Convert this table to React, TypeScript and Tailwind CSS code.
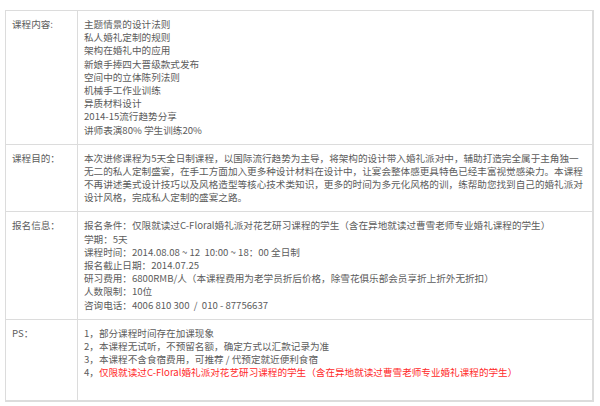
const font = { fontFamily: '"Noto Sans CJK SC", "Liberation Sans", sans-serif' };

function Row({ label, lines, last }: { label: string; lines: React.ReactNode[]; last?: boolean }) {
  return (
    <div className={`flex ${last ? "" : "border-b border-[#dcdcdc]"}`}>
      <div className="w-[72px] shrink-0 border-r border-[#dcdcdc] pl-[6px] pt-[7px]">{label}</div>
      <div className="flex-1 pl-[6px] pt-[7px] pb-[7px]">
        {lines.map((l, i) => (
          <div key={i} className="whitespace-pre h-[13.2px]">
            {l}
          </div>
        ))}
      </div>
    </div>
  );
}

export default function App() {
  const red = "text-[#ff2a2a]";
  return (
    <div className="w-[600px] h-[406px] bg-white pt-[10px] pl-[5px]" style={font}>
      <div className="w-[589px] border border-[#dcdcdc] border-r-2 border-b-2 text-[9.6px] leading-[13.2px] text-[#5c5c5c]">
        <Row
          label="课程内容:"
          lines={[
            "主题情景的设计法则",
            "私人婚礼定制的规则",
            "架构在婚礼中的应用",
            "新娘手捧四大晋级款式发布",
            "空间中的立体陈列法则",
            "机械手工作业训练",
            "异质材料设计",
            "2014-15流行趋势分享",
            "讲师表演80% 学生训练20%",
          ]}
        />
        <Row
          label="课程目的："
          lines={[
            "本次进修课程为5天全日制课程，以国际流行趋势为主导，将架构的设计带入婚礼派对中，辅助打造完全属于主角独一",
            "无二的私人定制盛宴，在手工方面加入更多种设计材料在设计中，让宴会整体感更具特色已经丰富视觉感染力。本课程",
            "不再讲述美式设计技巧以及风格造型等核心技术类知识，更多的时间为多元化风格的训，练帮助您找到自己的婚礼派对",
            "设计风格，完成私人定制的盛宴之路。",
          ]}
        />
        <Row
          label="报名信息："
          lines={[
            "报名条件：仅限就读过C-Floral婚礼派对花艺研习课程的学生（含在异地就读过曹雪老师专业婚礼课程的学生）",
            "学期：5天",
            "课程时间：2014.08.08 ~ 12  10:00 ~ 18：00 全日制",
            "报名截止日期：2014.07.25",
            "研习费用：6800RMB/人（本课程费用为老学员折后价格，除雪花俱乐部会员享折上折外无折扣）",
            "人数限制：10位",
            "咨询电话：4006 810 300  /  010 - 87756637",
          ]}
        />
        <Row
          last
          label="PS："
          lines={[
            "1，部分课程时间存在加课现象",
            "2，本课程无试听，不预留名额，确定方式以汇款记录为准",
            "3，本课程不含食宿费用，可推荐 / 代预定就近便利食宿",
            <>
              4，<span className={red}>仅限就读过C-Floral婚礼派对花艺研习课程的学生（含在异地就读过曹雪老师专业婚礼课程的学生）</span>
            </>,
            "",
          ]}
        />
      </div>
    </div>
  );
}
